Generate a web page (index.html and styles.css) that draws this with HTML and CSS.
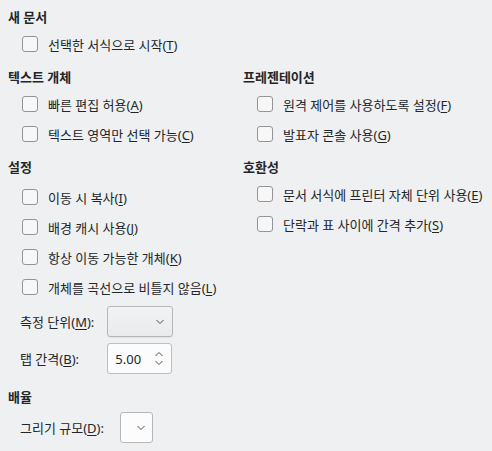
FILE: index.html
```html
<!DOCTYPE html>
<html lang="ko">
<head>
<meta charset="utf-8">
<link rel="stylesheet" href="styles.css">
</head>
<body>
<div class="page">
  <div class="grid">
    <section class="sec">
      <div class="hdr">새 문서</div>
      <div class="rows">
        <div class="row"><span class="cb"></span><span>선택한 서식으로 시작(<u>T</u>)</span></div>
      </div>
    </section>
    <div></div>
    <section class="sec">
      <div class="hdr">텍스트 개체</div>
      <div class="rows">
        <div class="row"><span class="cb"></span><span>빠른 편집 허용(<u>A</u>)</span></div>
        <div class="row"><span class="cb"></span><span>텍스트 영역만 선택 가능(<u>C</u>)</span></div>
      </div>
    </section>
    <section class="sec">
      <div class="hdr">프레젠테이션</div>
      <div class="rows">
        <div class="row"><span class="cb"></span><span>원격 제어를 사용하도록 설정(<u>F</u>)</span></div>
        <div class="row"><span class="cb"></span><span>발표자 콘솔 사용(<u>G</u>)</span></div>
      </div>
    </section>
    <section class="sec">
      <div class="hdr">설정</div>
      <div class="rows rows-extra">
        <div class="row"><span class="cb"></span><span>이동 시 복사(<u>I</u>)</span></div>
        <div class="row"><span class="cb"></span><span>배경 캐시 사용(<u>J</u>)</span></div>
        <div class="row"><span class="cb"></span><span>항상 이동 가능한 개체(<u>K</u>)</span></div>
        <div class="row"><span class="cb"></span><span>개체를 곡선으로 비틀지 않음(<u>L</u>)</span></div>
      </div>
      <div class="form">
        <span class="lbl">측정 단위(<u>M</u>):</span>
        <div class="combo combo-wide">
          <svg class="chev" width="10" height="6" viewBox="0 0 10 6"><path d="M1.5 1 L5 4.5 L8.5 1" fill="none" stroke="#4d4f52" stroke-width="1"/></svg>
        </div>
        <span class="lbl">탭 간격(<u>B</u>):</span>
        <div class="spin">
          <span class="val">5.00</span>
          <span class="arrows">
            <svg width="10" height="6" viewBox="0 0 10 6"><path d="M1.5 5 L5 1.5 L8.5 5" fill="none" stroke="#4d4f52" stroke-width="1"/></svg>
            <svg width="10" height="6" viewBox="0 0 10 6"><path d="M1.5 1 L5 4.5 L8.5 1" fill="none" stroke="#4d4f52" stroke-width="1"/></svg>
          </span>
        </div>
      </div>
    </section>
    <section class="sec">
      <div class="hdr">호환성</div>
      <div class="rows">
        <div class="row"><span class="cb"></span><span>문서 서식에 프린터 자체 단위 사용(<u>E</u>)</span></div>
        <div class="row"><span class="cb"></span><span>단락과 표 사이에 간격 추가(<u>S</u>)</span></div>
      </div>
    </section>
    <section class="sec sec-scale">
      <div class="hdr">배율</div>
      <div class="form2">
        <span class="lbl">그리기 규모(<u>D</u>):</span>
        <div class="combo combo-small">
          <svg class="chev" width="10" height="6" viewBox="0 0 10 6"><path d="M1.5 1 L5 4.5 L8.5 1" fill="none" stroke="#4d4f52" stroke-width="1"/></svg>
        </div>
      </div>
    </section>
  </div>
</div>
</body>
</html>
```
FILE: styles.css
```css
html, body {
  margin: 0;
  padding: 0;
  background: #eff0f1;
}
body {
  font-family: "Noto Sans", "Noto Sans CJK KR", sans-serif;
  font-size: 13px;
  color: #232629;
  width: 492px;
  height: 451px;
  overflow: hidden;
}
.page {
  padding: 8px 0 0 8px;
}
.grid {
  display: grid;
  grid-template-columns: 235px 1fr;
  row-gap: 9px;
  align-items: start;
}
.hdr {
  font-weight: bold;
  height: 18px;
  line-height: 18px;
}
.rows {
  margin-top: 3px;
}
.rows-extra {
  margin-top: 6px;
}
.row {
  height: 30px;
  display: flex;
  align-items: center;
  padding-left: 14px;
  white-space: nowrap;
}
.cb {
  width: 14px;
  height: 14px;
  border: 1px solid #929497;
  border-radius: 3px;
  background: #f7f7f8;
  margin-right: 10px;
  flex: none;
}
u {
  text-decoration: underline;
  text-underline-offset: 2px;
  text-decoration-thickness: 1px;
}
.form {
  display: grid;
  grid-template-columns: max-content max-content;
  column-gap: 13px;
  row-gap: 6px;
  align-items: center;
  padding-left: 12px;
  margin-top: 4px;
}
.lbl {
  white-space: nowrap;
}
.combo {
  height: 29px;
  border: 1px solid #b5b7b9;
  border-radius: 3px;
  box-sizing: content-box;
  display: flex;
  align-items: center;
  justify-content: flex-end;
}
.combo-wide {
  width: 64px;
  background: linear-gradient(#f2f3f4, #e9eaeb);
  box-shadow: 0 1px 0 rgba(0,0,0,0.06);
}
.combo-small {
  width: 31px;
  background: #fcfcfc;
}
.combo-wide .chev {
  margin-right: 7px;
}
.combo-small .chev {
  margin-right: 6px;
}
.spin {
  height: 29px;
  border: 1px solid #bcbec0;
  border-radius: 3px;
  background: #fcfcfc;
  display: flex;
  align-items: center;
  justify-content: space-between;
  padding: 0 7px 0 7px;
  box-sizing: content-box;
  width: 49px;
}
.arrows {
  display: flex;
  flex-direction: column;
  gap: 3px;
}
.arrows svg {
  display: block;
}
.sec-scale {
  margin-top: 5px;
}
.form2 {
  display: flex;
  align-items: center;
  gap: 16px;
  padding-left: 12px;
  margin-top: 6px;
}
```
